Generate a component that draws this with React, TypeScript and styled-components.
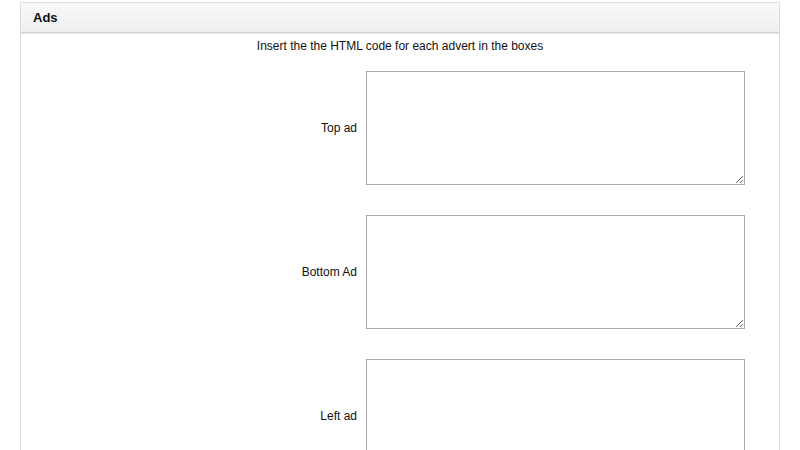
import React from "react";
import styled, { createGlobalStyle } from "styled-components";

const Global = createGlobalStyle`
  html, body { margin: 0; padding: 0; background: #fff; }
  body { font-family: "Liberation Sans", Arial, sans-serif; font-size: 12px; color: #111; }
`;

const Panel = styled.section`
  margin: 2px 0 0 20px;
  width: 760px;
  box-sizing: border-box;
  border: 1px solid #dcdcdc;
  border-bottom: none;
  height: 460px;
  overflow: hidden;
`;

const Header = styled.header`
  height: 29px;
  display: flex;
  align-items: center;
  padding-left: 12px;
  background: linear-gradient(#f9f9f9, #eeeeee);
  border-bottom: 1px solid #d3d3d3;
  box-shadow: 0 1px 0 #e6e6e6;
  font-weight: bold;
  font-size: 13px;
  color: #111;
`;

const Intro = styled.p`
  margin: 6px 0 0;
  text-align: center;
  line-height: 14px;
`;

const Form = styled.div`
  display: grid;
  grid-template-columns: 336px 379px;
  column-gap: 9px;
  row-gap: 30px;
  margin-top: 18px;
`;

const Label = styled.label`
  display: flex;
  align-items: center;
  justify-content: flex-end;
  font-size: 12px;
`;

const Box = styled.textarea`
  box-sizing: border-box;
  width: 379px;
  height: 114px;
  border: 1px solid #a9a9a9;
  margin: 0;
  padding: 2px;
  font-family: "Liberation Mono", monospace;
  background: #fff;
`;

const ads = ["Top ad", "Bottom Ad", "Left ad"];

export default function App() {
  return (
    <>
      <Global />
      <Panel>
        <Header>Ads</Header>
        <Intro>Insert the the HTML code for each advert in the boxes</Intro>
        <Form>
          {ads.map((a) => (
            <React.Fragment key={a}>
              <Label>{a}</Label>
              <Box />
            </React.Fragment>
          ))}
        </Form>
      </Panel>
    </>
  );
}
